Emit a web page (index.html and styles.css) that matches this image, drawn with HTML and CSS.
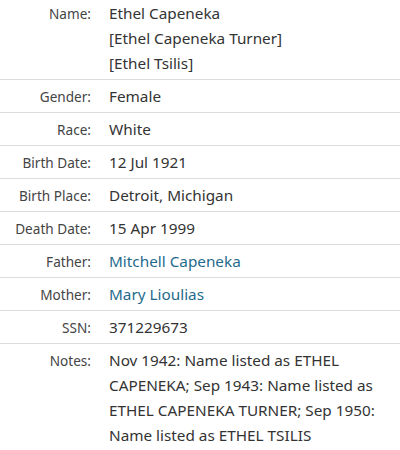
FILE: index.html
```html
<!DOCTYPE html>
<html>
<head>
<meta charset="utf-8">
<link rel="stylesheet" href="styles.css">
</head>
<body>
<div class="record">
  <div class="row first">
    <div class="label">Name:</div>
    <div class="value">Ethel Capeneka<br>[Ethel Capeneka Turner]<br>[Ethel Tsilis]</div>
  </div>
  <div class="row">
    <div class="label">Gender:</div>
    <div class="value">Female</div>
  </div>
  <div class="row">
    <div class="label">Race:</div>
    <div class="value">White</div>
  </div>
  <div class="row">
    <div class="label">Birth Date:</div>
    <div class="value">12 Jul 1921</div>
  </div>
  <div class="row">
    <div class="label">Birth Place:</div>
    <div class="value">Detroit, Michigan</div>
  </div>
  <div class="row">
    <div class="label">Death Date:</div>
    <div class="value">15 Apr 1999</div>
  </div>
  <div class="row">
    <div class="label">Father:</div>
    <div class="value"><a class="link" href="#">Mitchell Capeneka</a></div>
  </div>
  <div class="row">
    <div class="label">Mother:</div>
    <div class="value"><a class="link" href="#">Mary Lioulias</a></div>
  </div>
  <div class="row">
    <div class="label">SSN:</div>
    <div class="value">371229673</div>
  </div>
  <div class="row last">
    <div class="label">Notes:</div>
    <div class="value">Nov 1942: Name listed as ETHEL CAPENEKA; Sep 1943: Name listed as ETHEL CAPENEKA TURNER; Sep 1950: Name listed as ETHEL TSILIS</div>
  </div>
</div>
</body>
</html>
```

FILE: styles.css
```css
html, body {
  margin: 0;
  padding: 0;
  background: #fff;
}
body {
  font-family: "Noto Sans", "Liberation Sans", sans-serif;
  font-size: 15.3px;
  color: #333;
}
.record {
  margin-top: -3px;
  width: 400px;
}
.row {
  display: grid;
  grid-template-columns: 91px 1fr;
  column-gap: 18px;
  padding: 4px 8px 3px 0;
  line-height: 25px;
  border-bottom: 1px solid #dcdcdc;
}
.row.last {
  border-bottom: none;
}
.label {
  text-align: right;
  color: #444;
  font-size: 13.6px;
}
.value {
  color: #333;
}
.link {
  color: #1f6b8c;
  text-decoration: none;
}
```
